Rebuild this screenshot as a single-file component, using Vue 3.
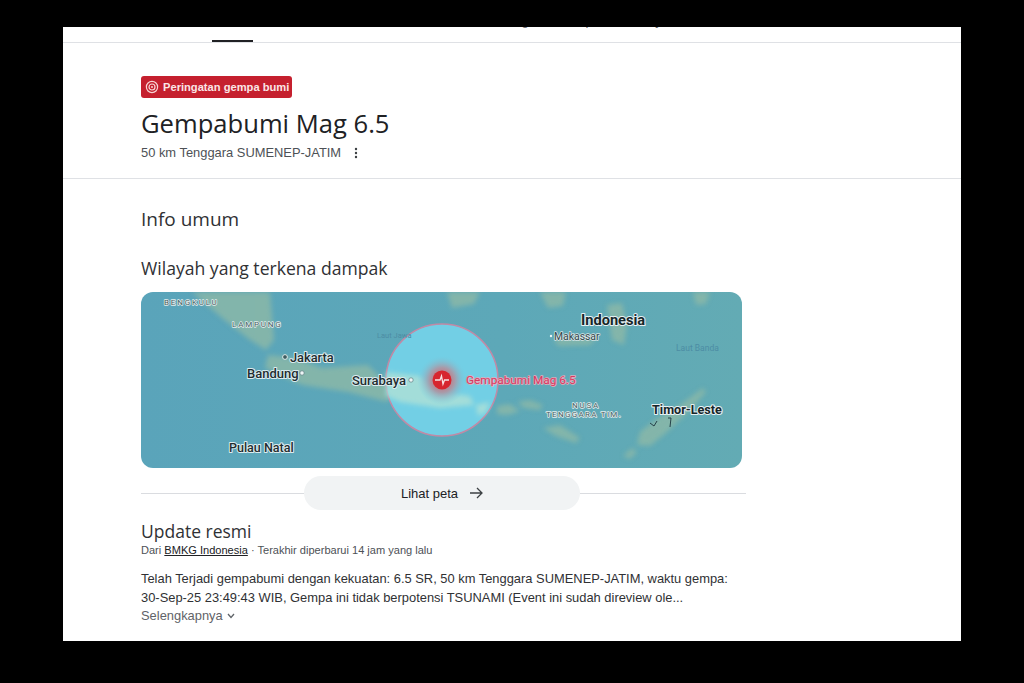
<script setup>
const cities = [
  { name: 'Jakarta', x: 290, y: 362, size: 12.8, cls: 'city' },
  { name: 'Bandung', x: 247, y: 378, size: 13, cls: 'city' },
  { name: 'Surabaya', x: 352, y: 385, size: 13, cls: 'city' },
  { name: 'Pulau Natal', x: 229, y: 452, size: 12.5, cls: 'city' },
  { name: 'Indonesia', x: 581, y: 325, size: 14.6, cls: 'country' },
  { name: 'Timor-Leste', x: 652, y: 414, size: 12.6, cls: 'country' },
  { name: 'Makassar', x: 554, y: 340, size: 10.4, cls: 'small' },
  { name: 'BENGKULU', x: 164, y: 305, size: 8, cls: 'region' },
  { name: 'LAMPUNG', x: 232, y: 327, size: 8, cls: 'region' },
  { name: 'NUSA', x: 572, y: 408, size: 8, cls: 'region' },
  { name: 'TENGGARA TIM.', x: 546, y: 417, size: 8, cls: 'region-tight' }
]
</script>

<template>
  <div class="screen">
    <div class="page">
      <div class="tabs">
        <span class="tab-line"></span>
        <div class="tab-clipped">
          <span>Ringkasan</span>
          <span>peta</span>
          <span>wilayah</span>
        </div>
      </div>

      <header class="head">
        <div class="badge">
          <svg width="14" height="14" viewBox="0 0 14 14" fill="none" stroke="#f8d5d5">
            <circle cx="7" cy="7" r="5.6" stroke-width="1.2" />
            <circle cx="7" cy="7" r="3" stroke-width="1.2" />
            <circle cx="7" cy="7" r="1" fill="#f8d5d5" stroke="none" />
          </svg>
          <span>Peringatan gempa bumi</span>
        </div>
        <h1>Gempabumi Mag 6.5</h1>
        <div class="location">
          <span>50 km Tenggara SUMENEP-JATIM</span>
          <svg width="4" height="12" viewBox="0 0 4 12" fill="#3c4043">
            <circle cx="2" cy="2" r="1.2" />
            <circle cx="2" cy="6" r="1.2" />
            <circle cx="2" cy="10" r="1.2" />
          </svg>
        </div>
      </header>

      <main class="body">
        <h2 class="info">Info umum</h2>
        <h3 class="area">Wilayah yang terkena dampak</h3>

        <div class="map">
          <svg width="601" height="176" viewBox="141 292 601 176">
            <defs>
              <filter id="soft" x="-20%" y="-20%" width="140%" height="140%">
                <feGaussianBlur stdDeviation="2.4" />
              </filter>
              <linearGradient id="ocean" x1="0" x2="1" y1="0" y2="0">
                <stop offset="0" stop-color="#5aa4ba" />
                <stop offset="0.6" stop-color="#5da8b8" />
                <stop offset="1" stop-color="#63abb4" />
              </linearGradient>
              <radialGradient id="quake">
                <stop offset="0" stop-color="#d8535f" />
                <stop offset="0.5" stop-color="#a99aa8" />
                <stop offset="1" stop-color="#70cfe4" stop-opacity="0" />
              </radialGradient>
            </defs>
            <rect x="141" y="292" width="601" height="176" fill="url(#ocean)" />
            <g fill="#8ab8a8" filter="url(#soft)" opacity="0.85">
              <path d="M192 292 L270 292 L274 340 L266 350 L250 340 L222 318 Z" />
              <path d="M268 355 L295 358 L322 368 L368 365 L388 385 L388 402 L348 392 L302 385 L265 368 Z" />
              <path d="M497 406 L510 404 L520 411 L508 415 L497 414 Z" />
              <path d="M517 402 L530 400 L543 405 L540 410 L524 408 Z" />
              <path d="M543 428 L560 425 L580 438 L576 443 L556 436 Z" />
              <path d="M637 445 L640 432 L655 420 L680 405 L703 388 L706 392 L690 410 L667 432 L650 446 Z" />
              <path d="M623 456 L632 448 L637 452 L630 459 Z" />
              <path d="M540 292 L566 292 L563 306 L548 308 Z" />
              <path d="M553 338 L597 338 L590 345 L558 346 Z" />
              <path d="M607 305 L622 303 L627 325 L624 345 L612 340 Z" />
              <path d="M693 292 L710 292 L706 304 L696 305 Z" />
              <path d="M447 292 L480 292 L474 304 L452 308 Z" />
            </g>
            <circle cx="442" cy="380" r="56" fill="#72cfe5" stroke="#c08aa6" stroke-width="1.5" />
            <g fill="#a9dfd8" filter="url(#soft)" opacity="0.9">
              <path d="M386 372 L420 376 L440 392 L470 396 L474 405 L440 408 L400 402 L386 396 Z" />
              <path d="M476 405 L490 402 L486 412 L478 416 Z" />
            </g>
            <circle cx="442" cy="380" r="25" fill="url(#quake)" />
            <circle cx="442" cy="380" r="9.5" fill="#d7252f" />
            <path d="M435 380 H440 L441.5 376 L443 384 L444.5 380 H449" fill="none" stroke="#f7e2e4" stroke-width="1.3" />
            <circle cx="285" cy="357" r="2.4" fill="#3f5c60" stroke="#dfecec" />
            <circle cx="302" cy="373" r="2.2" fill="#eef6f6" stroke="#5d7b80" stroke-width="0.7" />
            <circle cx="411" cy="380" r="2.2" fill="#eef6f6" stroke="#5d7b80" stroke-width="0.7" />
            <circle cx="551" cy="336" r="1.2" fill="#eef6f6" />
            <path d="M650 423 L654 426 L657 421 M668 418 L671 418 L670 427" fill="none" stroke="#27424a" stroke-width="1" />
            <text
              v-for="c in cities"
              :key="c.name"
              :x="c.x"
              :y="c.y"
              :font-size="c.size"
              :class="c.cls"
            >{{ c.name }}</text>
            <text x="466" y="384" font-size="11.8" class="quake-label">Gempabumi Mag 6.5</text>
            <text x="377" y="338" font-size="7.5" class="faint">Laut Jawa</text>
            <text x="676" y="351" font-size="8.5" class="faint">Laut Banda</text>
          </svg>
        </div>

        <div class="more-row">
          <span class="rule rule-left"></span>
          <div class="more-btn">
            <span>Lihat peta</span>
            <svg width="14" height="12" viewBox="0 0 14 12" fill="none" stroke="#3c4043" stroke-width="1.3">
              <path d="M1 6 H13 M8 1 L13 6 L8 11" />
            </svg>
          </div>
          <span class="rule"></span>
        </div>

        <h3 class="update">Update resmi</h3>
        <div class="source">
          Dari <span class="link">BMKG Indonesia</span> · Terakhir diperbarui 14 jam yang lalu
        </div>
        <p class="desc">
          Telah Terjadi gempabumi dengan kekuatan: 6.5 SR, 50 km Tenggara SUMENEP-JATIM, waktu gempa:<br />
          30-Sep-25 23:49:43 WIB, Gempa ini tidak berpotensi TSUNAMI (Event ini sudah direview ole...
        </p>
        <div class="expand">
          <span>Selengkapnya</span>
          <svg width="8" height="6" viewBox="0 0 8 6" fill="none" stroke="#5f6368" stroke-width="1.3">
            <path d="M1 1 L4 4.4 L7 1" />
          </svg>
        </div>
      </main>
    </div>
  </div>
</template>

<style>
body {
  background: #000;
}
</style>

<style scoped>
.screen {
  width: 1024px;
  height: 683px;
  background: #000;
  padding: 27px 63px 42px;
  box-sizing: border-box;
  overflow: hidden;
  font-family: "Liberation Sans", Arial, sans-serif;
}
.page {
  height: 614px;
  background: #fff;
  color: #202124;
  overflow: hidden;
}
.tabs {
  height: 15px;
  border-bottom: 1px solid #dfe1e5;
  display: flex;
  padding-left: 149px;
  overflow: hidden;
}
.tab-line {
  width: 41px;
  height: 2px;
  margin-top: 13px;
  background: #202124;
  flex: none;
}
.tab-clipped {
  display: flex;
  gap: 22px;
  margin: -15px 0 0 249px;
  font-size: 13px;
  line-height: 18px;
  height: 18px;
  color: #5f6368;
  white-space: nowrap;
}
.head {
  height: 136px;
  padding: 33px 0 0 78px;
  box-sizing: border-box;
  border-bottom: 1px solid #dfe1e5;
}
.badge {
  display: inline-flex;
  align-items: center;
  gap: 4px;
  height: 22px;
  padding: 0 3px 0 4px;
  background: #c5202e;
  color: #fbe6e6;
  border-radius: 3px;
  font-size: 11.15px;
  font-weight: 700;
}
h1,
h2,
h3,
p {
  margin: 0;
  font-weight: 400;
}
h1 {
  margin-top: 9px;
  font-family: "Open Sans", sans-serif;
  font-size: 25.6px;
  line-height: 34px;
  font-weight: 500;
}
.location {
  display: flex;
  align-items: center;
  gap: 13px;
  margin-top: 4px;
  font-size: 12.9px;
  line-height: 16px;
  color: #4d5156;
}
.body {
  padding: 0 0 0 78px;
}
.info {
  margin-top: 26px;
  font-family: "Open Sans", sans-serif;
  font-size: 19px;
  line-height: 28px;
  color: #303134;
}
.area {
  margin-top: 23px;
  font-family: "Open Sans", sans-serif;
  font-size: 17.6px;
  line-height: 24px;
  color: #303134;
}
.map {
  width: 601px;
  height: 176px;
  margin-top: 12px;
  border-radius: 12px;
  overflow: hidden;
}
.map svg {
  display: block;
}
.map text {
  font-family: Roboto, "Liberation Sans", sans-serif;
  paint-order: stroke;
  stroke-linejoin: round;
}
.city {
  fill: #1f2d30;
  stroke: #dcecef;
  stroke-width: 2px;
  font-weight: 500;
}
.country {
  fill: #16262a;
  stroke: #e6f1f3;
  stroke-width: 2px;
  font-weight: 700;
}
.small {
  fill: #33474b;
  stroke: #d8e6e8;
  stroke-width: 1.5px;
}
.region {
  fill: #4a5f63;
  stroke: #e3eeee;
  stroke-width: 1.5px;
  letter-spacing: 1.8px;
}
.region-tight {
  fill: #4a5f63;
  stroke: #e3eeee;
  stroke-width: 1.5px;
  letter-spacing: 1.3px;
}
.quake-label {
  fill: #d63a62;
  stroke: #e3aebd;
  stroke-width: 1.5px;
  font-weight: 400;
}
.faint {
  fill: #4d8da4;
}
.more-row {
  display: flex;
  align-items: center;
  width: 605px;
  margin-top: 8px;
}
.rule {
  flex: 1;
  height: 1px;
  background: #dadce0;
}
.rule-left {
  flex: none;
  width: 163px;
}
.more-btn {
  width: 276px;
  height: 34px;
  border-radius: 17px;
  background: #f1f3f4;
  display: flex;
  align-items: center;
  justify-content: center;
  gap: 11px;
  font-size: 13px;
  color: #202124;
}
.update {
  margin-top: 10px;
  font-family: "Open Sans", sans-serif;
  font-size: 17.5px;
  line-height: 22px;
  color: #303134;
}
.source {
  margin-top: 1px;
  font-size: 11.05px;
  line-height: 14px;
  color: #4d5156;
}
.link {
  color: #202124;
  text-decoration: underline;
}
.desc {
  margin-top: 12px;
  font-size: 12.9px;
  line-height: 19px;
  color: #303134;
  white-space: nowrap;
}
.expand {
  display: flex;
  align-items: center;
  gap: 4px;
  font-size: 12.9px;
  line-height: 18px;
  color: #5f6368;
}
</style>
